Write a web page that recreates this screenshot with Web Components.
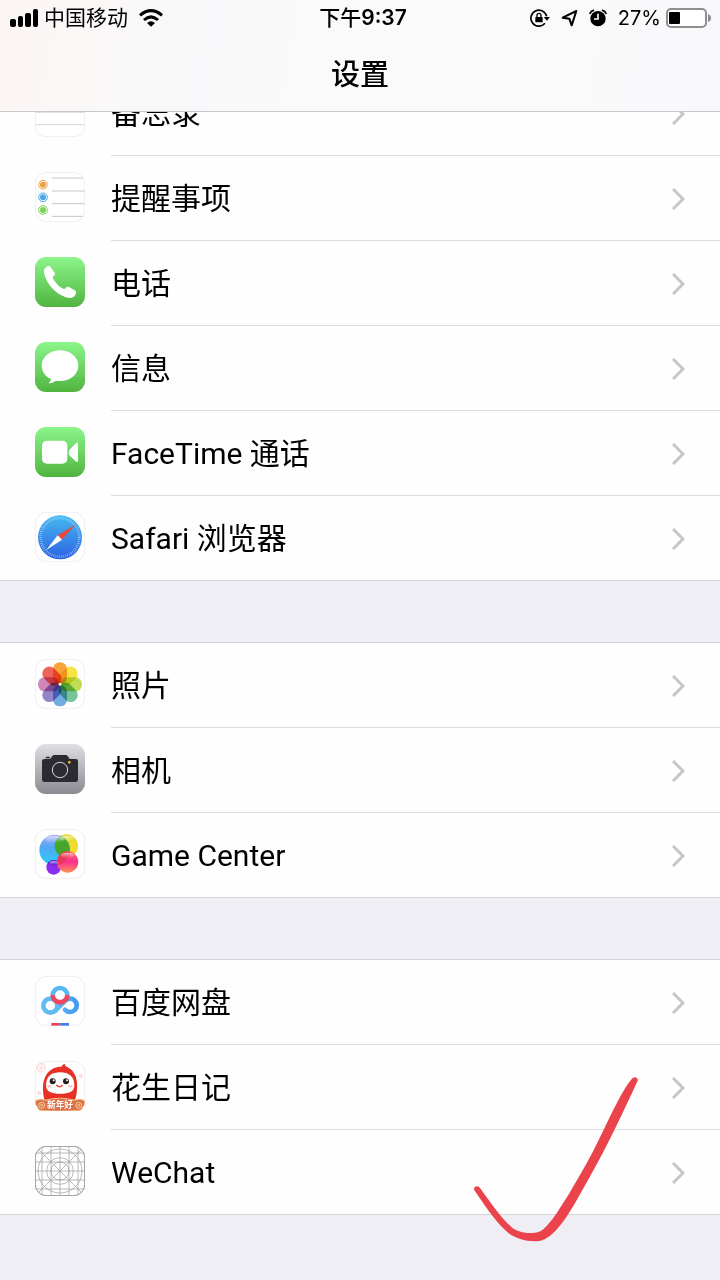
<!DOCTYPE html>
<html lang="zh-CN">
<head>
<meta charset="utf-8">
<meta name="viewport" content="width=device-width, initial-scale=1">
<title>设置</title>
<style>
  body {
    margin: 0;
    background: #efeef4;
    color: #000;
    font-family: Roboto, "Noto Sans CJK SC", sans-serif;
  }
</style>
</head>
<body>

<settings-page>
  <status-bar slot="header" carrier="中国移动" period="下午" time="9:37" battery="27"></status-bar>
  <nav-title slot="header">设置</nav-title>

  <settings-group>
    <settings-row icon="notes">备忘录</settings-row>
    <settings-row icon="reminders">提醒事项</settings-row>
    <settings-row icon="phone">电话</settings-row>
    <settings-row icon="messages">信息</settings-row>
    <settings-row icon="facetime">FaceTime 通话</settings-row>
    <settings-row icon="safari">Safari 浏览器</settings-row>
  </settings-group>

  <settings-group>
    <settings-row icon="photos">照片</settings-row>
    <settings-row icon="camera">相机</settings-row>
    <settings-row icon="gamecenter">Game Center</settings-row>
  </settings-group>

  <settings-group>
    <settings-row icon="netdisk">百度网盘</settings-row>
    <settings-row icon="peanut">花生日记</settings-row>
    <settings-row icon="grid">WeChat</settings-row>
    <check-mark slot="overlay"></check-mark>
  </settings-group>
</settings-page>

<script>
// White tile with a hairline edge, shared by the light icons
const tile = '<rect x="1" y="1" width="148" height="148" rx="33" fill="#fff" stroke="#e6e6e9" stroke-width="2"/>';

const greenTile = `
  <defs><linearGradient id="g" x2="0" y2="1"><stop stop-color="#8cf58b"/><stop offset="1" stop-color="#50b53f"/></linearGradient></defs>
  <rect width="150" height="150" rx="33" fill="url(#g)"/>`;

const petalColors = ['#f8a02e', '#f6e338', '#bddb4c', '#70c291', '#6aa8e3', '#8f80c6', '#cd80b5', '#ee5c50'];
const petals = petalColors.map((color, i) =>
  `<rect x="54" y="10" width="42" height="64" rx="20" fill="${color}" transform="rotate(${i * 45} 75 76)" style="mix-blend-mode:multiply"/>`
).join('');

// All icons are drawn on a 150 x 150 grid
const icons = {
  notes: `${tile}<path d="M0 113H150M0 76H150" stroke="#c9c9cb" stroke-width="2"/>`,

  reminders: `${tile}
    <g stroke="#c6c6ca" stroke-width="3"><path d="M50 18H144M50 57H149M50 95H149M50 133H144"/></g>
    <g fill="#fff" stroke-width="3">
      <circle cx="24" cy="38" r="13" stroke="#eba13f"/><circle cx="24" cy="76" r="13" stroke="#4ba5ea"/><circle cx="24" cy="114" r="13" stroke="#7bd453"/>
    </g>
    <circle cx="24" cy="38" r="9" fill="#eba13f"/><circle cx="24" cy="76" r="9" fill="#4ba5ea"/><circle cx="24" cy="114" r="9" fill="#7bd453"/>`,

  phone: `${greenTile}
    <path fill="#fff" d="M27 44C26 36 33 29 40 27C44 26 46 28 48 32L59 47C61 51 60 53 56 56C52 60 53 63 56 68C63 79 72 88 82 94C86 97 89 97 92 93C95 89 98 88 102 90L118 99C123 102 125 105 123 109C120 118 113 124 105 123C68 118 31 80 27 44Z"/>`,

  messages: `${greenTile}
    <path fill="#fff" d="M75 25C105 25 130 45 130 71S105 117 75 117C71 117 67 117 63 116C56 121 48 124 40 124C45 120 48 115 48 111C31 103 20 88 20 71C20 45 45 25 75 25Z"/>`,

  facetime: `${greenTile}
    <rect x="21" y="41" width="76" height="69" rx="15" fill="#fff"/>
    <path fill="#fff" d="M103 69L121 50Q129 42 129 53V99Q129 110 121 102L103 85Q99 77 103 69Z"/>`,

  safari: `
    <defs><linearGradient id="s" x2="0" y2="1"><stop stop-color="#45b9f0"/><stop offset="1" stop-color="#2d62e3"/></linearGradient></defs>
    ${tile}
    <circle cx="75" cy="76" r="66" fill="url(#s)"/>
    <circle cx="75" cy="76" r="58" fill="none" stroke="#c4e2fb" stroke-width="8" stroke-dasharray="2 4" opacity=".75"/>
    <path fill="#e9483c" d="M121 38L68 70L81 83Z"/>
    <path fill="#fff" d="M34 114L68 70L81 83Z"/>`,

  photos: `${tile}<g style="isolation:isolate" opacity=".95">${petals}</g><circle cx="75" cy="76" r="4" fill="#fff"/>`,

  camera: `
    <defs><linearGradient id="c" x2="0" y2="1"><stop stop-color="#e0dfe4"/><stop offset="1" stop-color="#8c8a91"/></linearGradient></defs>
    <rect width="150" height="150" rx="33" fill="url(#c)"/>
    <path fill="#2c2b31" d="M28 45H43C50 45 50 33 57 33H93C100 33 100 45 107 45H122Q129 45 129 52V107Q129 114 122 114H28Q21 114 21 107V52Q21 45 28 45Z"/>
    <rect x="32" y="38" width="13" height="5" rx="2" fill="#2c2b31"/>
    <circle cx="75" cy="78" r="23" fill="none" stroke="#d4d3d8" stroke-width="3"/>
    <circle cx="103" cy="55" r="4" fill="#f6bd28"/>`,

  gamecenter: `
    <defs>
      <linearGradient id="b" x2="0" y2="1"><stop stop-color="#a9aaf4"/><stop offset=".4" stop-color="#52a7f6"/><stop offset="1" stop-color="#28d0f7"/></linearGradient>
      <linearGradient id="y" x2="1" y2="1"><stop stop-color="#d5dc30"/><stop offset="1" stop-color="#ffd92d"/></linearGradient>
      <linearGradient id="r" x2="0" y2="1"><stop stop-color="#f66a72"/><stop offset=".5" stop-color="#f9308f"/><stop offset="1" stop-color="#ff9058"/></linearGradient>
      <linearGradient id="w" x2="0" y2="1"><stop stop-color="#fff" stop-opacity=".6"/><stop offset="1" stop-color="#fff" stop-opacity="0"/></linearGradient>
      <clipPath id="k"><circle cx="59" cy="63" r="46"/></clipPath>
      <clipPath id="m"><circle cx="98" cy="99" r="32"/></clipPath>
    </defs>
    ${tile}
    <circle cx="94" cy="51" r="35" fill="url(#y)"/>
    <circle cx="59" cy="63" r="46" fill="url(#b)"/>
    <circle cx="94" cy="51" r="35" fill="#44a52a" clip-path="url(#k)"/>
    <circle cx="56" cy="115" r="22" fill="#8b2cf1"/>
    <circle cx="56" cy="115" r="22" fill="#5b20cc" clip-path="url(#k)"/>
    <circle cx="98" cy="99" r="32" fill="url(#r)"/>
    <circle cx="59" cy="63" r="46" fill="#e73446" opacity=".7" clip-path="url(#m)"/>
    <ellipse cx="59" cy="31" rx="29" ry="11" fill="url(#w)"/>
    <ellipse cx="95" cy="28" rx="21" ry="8" fill="url(#w)"/>
    <ellipse cx="98" cy="79" rx="20" ry="8" fill="url(#w)"/>
    <ellipse cx="56" cy="102" rx="13" ry="6" fill="url(#w)"/>`,

  netdisk: `
    <defs><linearGradient id="n"><stop stop-color="#60bdf2"/><stop offset="1" stop-color="#4299f1"/></linearGradient></defs>
    ${tile}
    <g fill="none" stroke-width="14">
      <circle cx="46" cy="89" r="21" stroke="#5ebcf2"/>
      <path stroke="url(#n)" stroke-linecap="round" d="M90 101A20 20 0 1 0 90 75L61 104"/>
      <path stroke="#55b7f4" d="M53 58A22 22 0 0 1 97 58"/>
      <path stroke="#f0475f" d="M53 57A22 22 0 0 0 97 57"/>
    </g>
    <path fill="#e4455c" d="M49 141H76V149H49Z"/><path fill="#3e7df0" d="M76 141H102V149H76Z"/>`,

  peanut: `${tile}
    <g fill="none" stroke="#fae0dd" stroke-width="5"><circle cx="18" cy="20" r="12"/><circle cx="18" cy="20" r="4"/><circle cx="138" cy="45" r="4"/><circle cx="13" cy="96" r="4"/></g>
    <path fill="#e83126" d="M28 116C23 92 20 64 34 41C46 22 66 16 80 17C81 12 85 9 90 9C89 13 91 16 98 19C122 30 129 60 126 86C125 98 123 108 120 116Z"/>
    <path fill="#fff" d="M33 74C33 44 51 34 76 34S118 46 118 74C118 92 101 98 76 98S33 92 33 74Z"/>
    <circle cx="53" cy="61" r="9" fill="#26201f"/><circle cx="93" cy="61" r="9" fill="#26201f"/>
    <circle cx="56" cy="58" r="3" fill="#fff"/><circle cx="96" cy="58" r="3" fill="#fff"/>
    <ellipse cx="43" cy="76" rx="7" ry="4" fill="#fbc9c3"/><ellipse cx="106" cy="76" rx="7" ry="4" fill="#fbc9c3"/>
    <path d="M65 73Q74 82 82 73" fill="none" stroke="#d93a2e" stroke-width="4" stroke-linecap="round"/>
    <path fill="#dc7048" stroke="#f2bd82" stroke-width="3" d="M2 119Q16 111 31 118Q75 105 119 118Q136 111 148 119Q152 130 143 139Q140 150 124 149Q75 152 26 149Q10 150 8 139Q-1 130 2 119Z"/>
    <g fill="none" stroke="#f8d39d" stroke-width="3"><circle cx="20" cy="133" r="9"/><circle cx="20" cy="133" r="3"/><circle cx="131" cy="133" r="9"/><circle cx="131" cy="133" r="3"/></g>
    <text x="75" y="140" font-size="26" font-weight="700" fill="#fff" text-anchor="middle">新年好</text>`,

  grid: `
    <defs><clipPath id="q"><rect width="150" height="150" rx="33"/></clipPath></defs>
    <rect x="1" y="1" width="148" height="148" rx="33" fill="#fff" stroke="#96969a" stroke-width="3"/>
    <g fill="none" stroke="#97979b" stroke-width="2" clip-path="url(#q)">
      <path d="M21 0V150M48 0V150M75 0V150M102 0V150M129 0V150M0 21H150M0 48H150M0 75H150M0 102H150M0 129H150M0 0L150 150M150 0L0 150"/>
      <circle cx="75" cy="75" r="66"/><circle cx="75" cy="75" r="40"/><circle cx="75" cy="75" r="27"/>
    </g>`
};

class SettingsPage extends HTMLElement {

  connectedCallback() {
    let shadowRoot = this.attachShadow({ mode: 'open' });
    shadowRoot.innerHTML = `
      <style>
        :host {
          display: flex;
          flex-direction: column;
          min-height: 100vh;
        }

        header {
          position: sticky;
          top: 0;
          z-index: 1;
          border-bottom: 1px solid #c9c9cc;
          background: linear-gradient(100deg, #fcf5f4 0, #faf8f7 14%, #f8f8fa 28%, #fafafa 45%, #fafafa 75%, #f8f8fc 100%);
        }

        /* the list is scrolled a little way under the header */
        main {
          display: flex;
          flex-direction: column;
          gap: 61px;
          margin-top: -42px;
          padding-bottom: 61px;
        }
      </style>
      <header><slot name="header"></slot></header>
      <main><slot></slot></main>
    `;
  }

}
window.customElements.define('settings-page', SettingsPage);

class StatusBar extends HTMLElement {

  connectedCallback() {
    let shadowRoot = this.attachShadow({ mode: 'open' });
    let level = Number(this.getAttribute('battery'));

    shadowRoot.innerHTML = `
      <style>
        :host {
          display: grid;
          grid-template-columns: 1fr auto 1fr;
          align-items: center;
          height: 36px;
          padding: 0 4px 0 10px;
          font-size: 21px;
          line-height: 36px;
        }

        svg {
          display: block;
          flex: none;
        }

        div {
          display: flex;
          align-items: center;
        }

        .left {
          gap: 6px;
        }

        .wifi {
          margin-left: 5px;
        }

        .time {
          font-family: Inter, "Noto Sans CJK SC", sans-serif;
          font-weight: 500;
        }

        .time b {
          font-weight: 600;
        }

        .right {
          justify-content: flex-end;
          gap: 11px;
        }

        .power {
          gap: 5px;
          font-family: Inter, sans-serif;
          font-size: 20px;
        }
      </style>
      <div class="left">
        <svg width="28" height="18" viewBox="0 0 28 18">
          <rect y="10" width="6" height="8" rx="2"/><rect x="8" y="7" width="5" height="11" rx="2"/><rect x="15" y="4" width="6" height="14" rx="2"/><rect x="23" width="5" height="18" rx="2"/>
        </svg>
        <span>${this.getAttribute('carrier')}</span>
        <svg class="wifi" width="24" height="18" viewBox="0 0 72 54">
          <g fill="none" stroke="#000" stroke-width="9"><path d="M3 19Q36-9 69 19M15 33Q36 14 57 33"/></g>
          <path d="M36 53L24 42Q36 32 48 42Z"/>
        </svg>
      </div>
      <div class="time"><span>${this.getAttribute('period')}</span><b>${this.getAttribute('time')}</b></div>
      <div class="right">
        <svg width="20" height="18" viewBox="0 0 60 54">
          <path fill="none" stroke="#000" stroke-width="5" d="M45 43A24 24 0 1 1 50 22"/>
          <path d="M41 24H60L51 35Z"/>
          <rect x="16" y="24" width="22" height="16" rx="2"/>
          <path fill="none" stroke="#000" stroke-width="4" d="M21 26V19A6 6 0 0 1 33 19V26"/>
        </svg>
        <svg width="17" height="18" viewBox="0 0 51 54">
          <path fill="none" stroke="#000" stroke-width="6" stroke-linejoin="round" d="M5 26L46 6L32 49L25 29Z"/>
        </svg>
        <svg width="18" height="18" viewBox="0 0 54 54">
          <circle cx="27" cy="29" r="23"/>
          <path fill="none" stroke="#000" stroke-width="5" stroke-linecap="round" d="M3 13Q6 6 13 4M51 13Q48 6 41 4"/>
          <path fill="none" stroke="#fff" stroke-width="5" d="M27 14V30H15"/>
        </svg>
        <div class="power">
          <span>${level}%</span>
          <svg width="50" height="20" viewBox="0 0 50 20">
            <rect x="1" y="1" width="39" height="18" rx="4" fill="#fff" stroke="#8f8f92" stroke-width="2"/>
            <rect x="3" y="4" width="${Math.round(level * 40 / 100)}" height="12" rx="1"/>
            <path fill="#8f8f92" d="M42 6Q45 7 45 10T42 14Z"/>
          </svg>
        </div>
      </div>
    `;
  }

}
window.customElements.define('status-bar', StatusBar);

class NavTitle extends HTMLElement {

  connectedCallback() {
    let shadowRoot = this.attachShadow({ mode: 'open' });
    shadowRoot.innerHTML = `
      <style>
        :host {
          display: block;
          padding-top: 3px;
        }

        h1 {
          margin: 0;
          font-size: 29px;
          font-weight: 500;
          line-height: 72px;
          text-align: center;
        }
      </style>
      <h1><slot></slot></h1>
    `;
  }

}
window.customElements.define('nav-title', NavTitle);

class SettingsGroup extends HTMLElement {

  connectedCallback() {
    let shadowRoot = this.attachShadow({ mode: 'open' });
    shadowRoot.innerHTML = `
      <style>
        :host {
          display: block;
          position: relative;
          background: #fefefe;
          border-top: 1px solid #d5d4d9;
        }

        ::slotted(settings-row:last-of-type) {
          --divider: #d5d4d9;
          --divider-start: 0px;
        }
      </style>
      <slot></slot>
      <slot name="overlay"></slot>
    `;
  }

}
window.customElements.define('settings-group', SettingsGroup);

class SettingsRow extends HTMLElement {

  connectedCallback() {
    let shadowRoot = this.attachShadow({ mode: 'open' });
    shadowRoot.innerHTML = `
      <style>
        :host {
          display: block;
        }

        a {
          display: flex;
          align-items: center;
          gap: 26px;
          height: 85px;
          padding: 0 35px;
          box-sizing: border-box;
          color: inherit;
          font-size: 30px;
          text-decoration: none;
          background: linear-gradient(var(--divider, #dcdce0), var(--divider, #dcdce0)) var(--divider-start, 111px) 100% / 100% 1px no-repeat;
        }

        .label {
          flex: 1;
          line-height: 40px;
        }

        .icon {
          flex: none;
          width: 50px;
          height: 50px;
          margin-bottom: 3px;
        }

        .chevron {
          flex: none;
          width: 13px;
          height: 22px;
        }
      </style>
      <a href="#${this.getAttribute('icon')}">
        <svg class="icon" viewBox="0 0 150 150" aria-hidden="true">${icons[this.getAttribute('icon')]}</svg>
        <span class="label"><slot></slot></span>
        <svg class="chevron" viewBox="0 0 13 22" aria-hidden="true"><path d="M1 1L11 11L1 21" fill="none" stroke="#c5c5ca" stroke-width="3"/></svg>
      </a>
    `;
  }

}
window.customElements.define('settings-row', SettingsRow);

// Hand-drawn red tick lying over the end of the last group
class CheckMark extends HTMLElement {

  connectedCallback() {
    let shadowRoot = this.attachShadow({ mode: 'open' });
    shadowRoot.innerHTML = `
      <style>
        :host {
          position: absolute;
          right: 0;
          bottom: -45px;
          pointer-events: none;
        }

        svg {
          display: block;
        }
      </style>
      <svg width="260" height="200" viewBox="0 0 780 600">
        <path fill="#eb434c" d="M533 62C534 53 526 48 518 54C506 66 491 92 480 111C452 162 428 218 400 272C375 320 350 362 325 405C302 440 278 483 250 508C238 518 226 519 212 519C190 519 168 513 154 501C120 471 90 424 60 384C54 374 38 380 43 391C70 430 102 480 139 514C160 533 192 543 224 544C254 544 274 526 292 506C328 466 356 408 386 357C416 304 444 250 470 196C492 150 513 106 533 62Z"/>
      </svg>
    `;
  }

}
window.customElements.define('check-mark', CheckMark);
</script>
</body>
</html>
